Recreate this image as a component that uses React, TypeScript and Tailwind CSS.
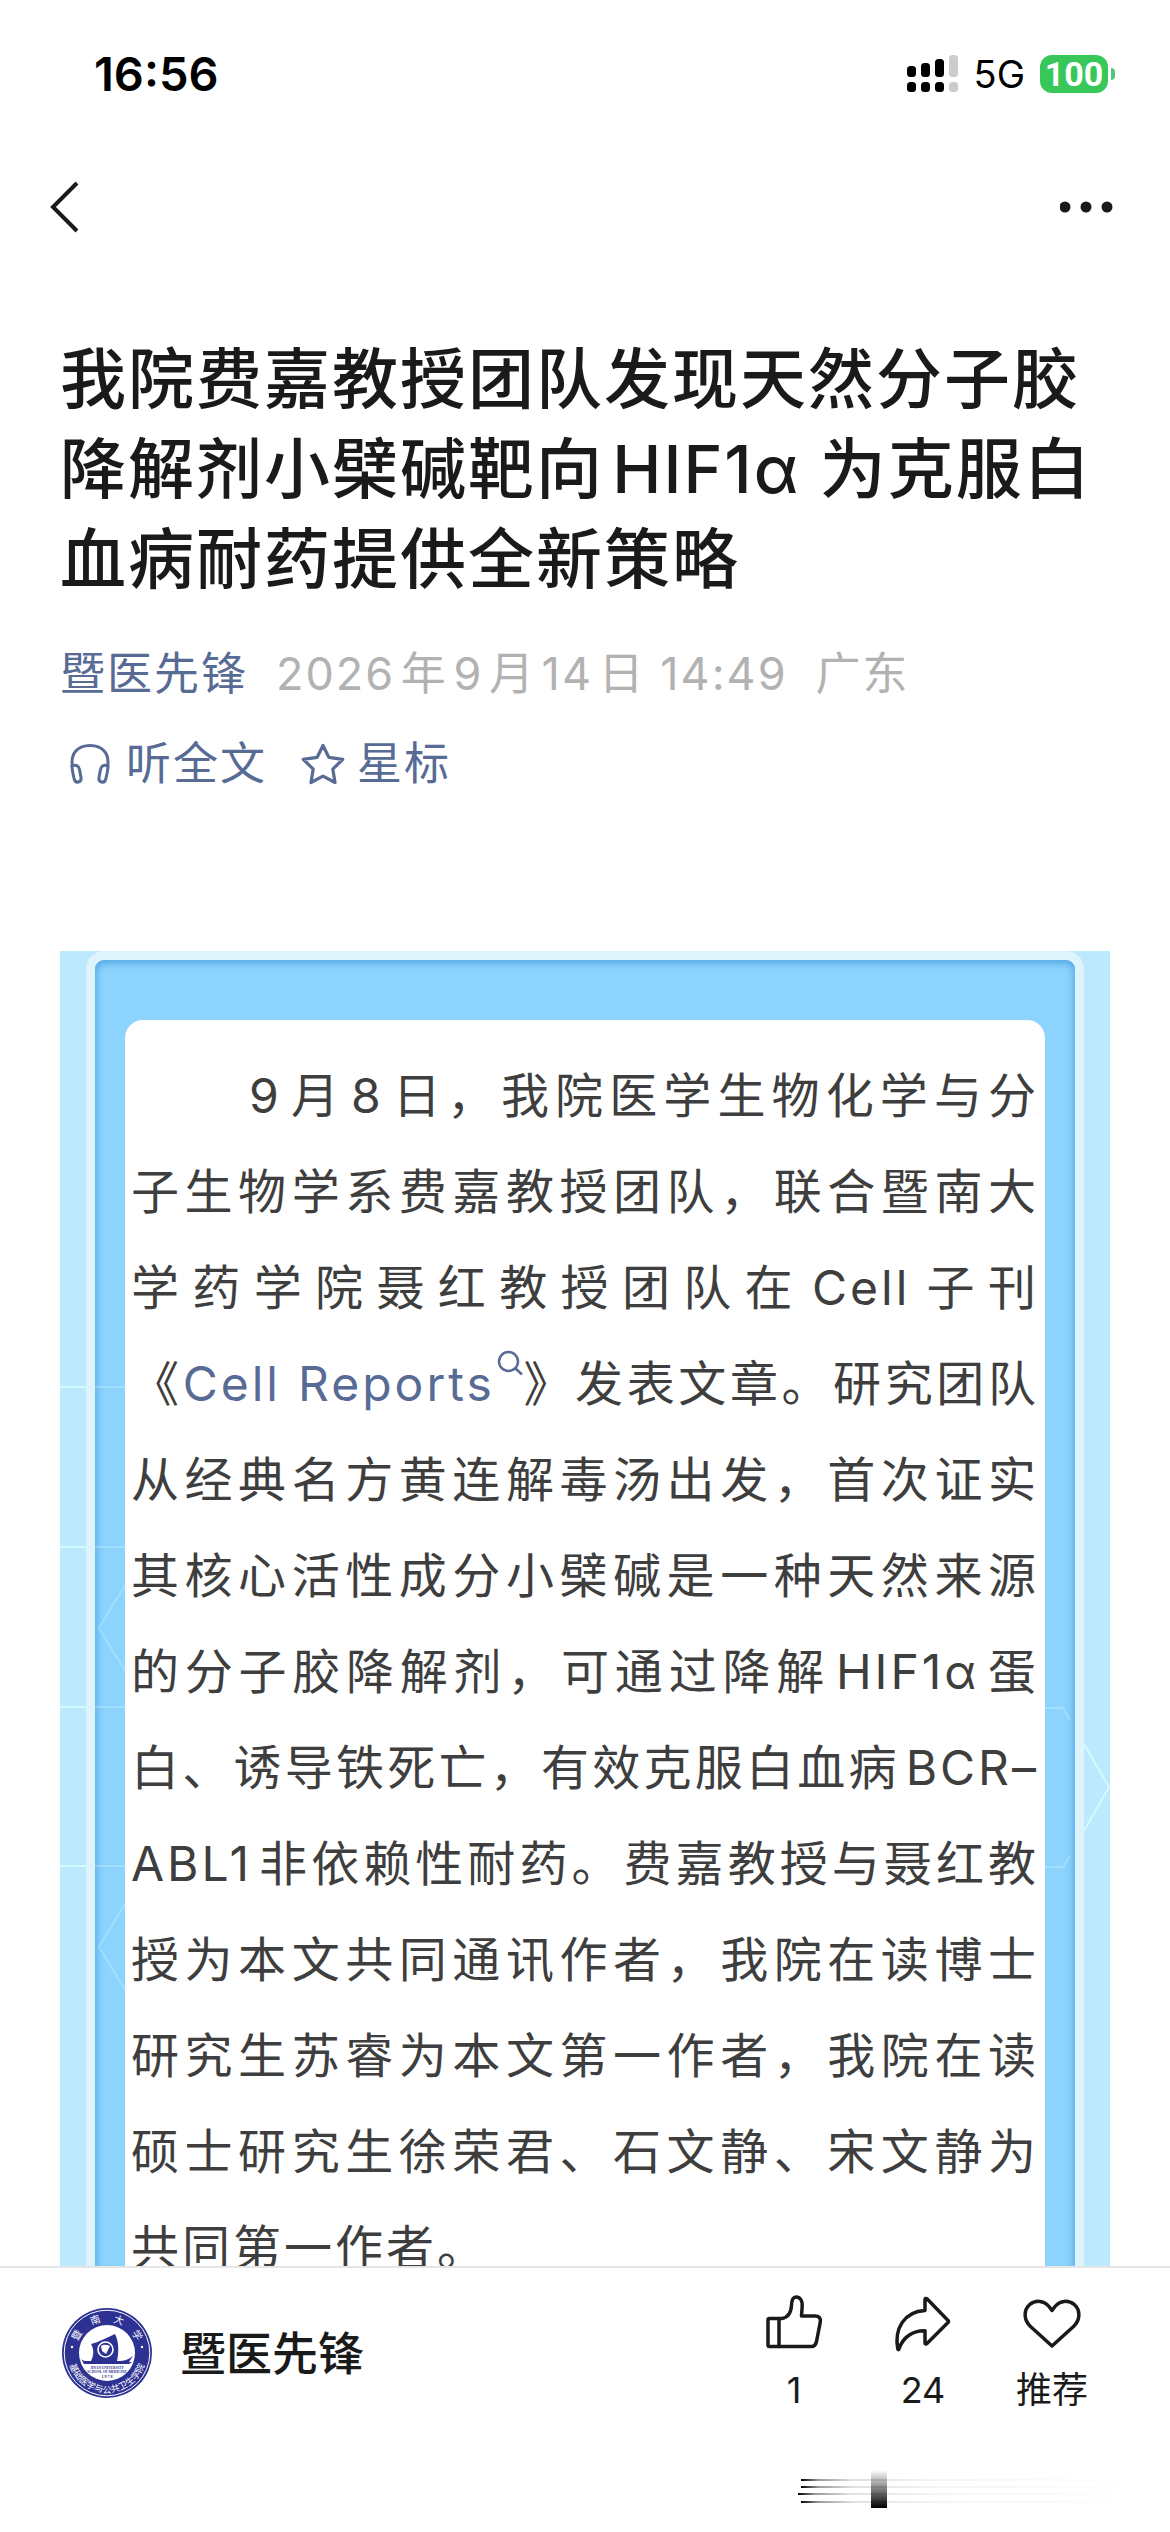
const STORY_BEFORE = "9月8日，我院医学生物化学与分子生物学系费嘉教授团队，联合暨南大学药学院聂红教授团队在Cell子刊《";
const STORY_AFTER =
  "》发表文章。研究团队从经典名方黄连解毒汤出发，首次证实其核心活性成分小檗碱是一种天然来源的分子胶降解剂，可通过降解HIF1α蛋白、诱导铁死亡，有效克服白血病BCR–ABL1非依赖性耐药。费嘉教授与聂红教授为本文共同通讯作者，我院在读博士研究生苏睿为本文第一作者，我院在读硕士研究生徐荣君、石文静、宋文静为共同第一作者。";

function SignalIcon() {
  const bars = [
    { x: 0, y: 11, fill: "#000" },
    { x: 14, y: 8, fill: "#000" },
    { x: 28, y: 4, fill: "#000" },
    { x: 42, y: 0, fill: "#ccc" },
  ];
  return (
    <svg viewBox="0 0 51 38" className="h-[38px] w-[51px]" aria-label="信号">
      {bars.map((b) => (
        <g key={b.x} fill={b.fill}>
          <rect x={b.x} y={b.y} width="9" height={22 - b.y} rx="3.5" />
          <rect x={b.x} y="27" width="9" height="10" rx="3.5" />
        </g>
      ))}
    </svg>
  );
}

function StatusBar() {
  return (
    <div className="flex h-[147px] shrink-0 items-center justify-between pr-[55px] pl-[94px]">
      <time className="text-[47px] leading-none font-semibold text-black">16:56</time>
      <div className="flex items-center">
        <SignalIcon />
        <span className="ml-[16px] text-[38px] leading-none text-black">5G</span>
        <span className="ml-[15px] flex h-[38px] w-[68px] items-center justify-center rounded-[12px] bg-[#38c759] font-[Roboto] text-[34px] leading-none font-bold text-white">
          100
        </span>
        <span className="ml-[3px] h-[12px] w-[4px] rounded-r-full bg-[#55c878]" />
      </div>
    </div>
  );
}

function NavBar() {
  return (
    <nav className="flex h-[120px] shrink-0 items-center justify-between px-12 text-[#1a1a1a]">
      <button type="button" aria-label="返回">
        <svg viewBox="0 0 34 52" className="h-[52px] w-[34px]" fill="none" stroke="currentColor" strokeWidth="4">
          <path d="M29 2 5 26l24 24" />
        </svg>
      </button>
      <button type="button" aria-label="更多">
        <svg viewBox="0 0 62 20" className="h-[20px] w-[62px]" fill="currentColor">
          <circle cx="5" cy="10" r="5.5" />
          <circle cx="26" cy="10" r="5.5" />
          <circle cx="47" cy="10" r="5.5" />
        </svg>
      </button>
    </nav>
  );
}

function HeadphonesIcon() {
  return (
    <svg viewBox="0 0 44 44" className="h-[44px] w-[44px]" fill="none" stroke="currentColor" strokeWidth="3">
      <path d="M4.500 25C2 11 10 3.500 22 3.500S42 11 39.500 25" />
      <path d="M4 24c4-1.500 6.500-.5 7.500 3.500l1.500 8c.8 5-5.500 6.500-6.800 1.500C5 32 4 27 4 24z" />
      <path d="M40 24c-4-1.500-6.500-.5-7.500 3.500l-1.500 8c-.8 5 5.500 6.500 6.800 1.500C39 32 40 27 40 24z" />
    </svg>
  );
}

function StarIcon() {
  return (
    <svg viewBox="0 0 44 44" className="h-[44px] w-[44px]" fill="none" stroke="currentColor" strokeWidth="3.200" strokeLinejoin="round">
      <path d="M22 3.500l5.800 11.800 14 2-10 9.800L34 40.500 22 34.200 10 40.500l2.200-13.400-10-9.800 14-2z" />
    </svg>
  );
}

function SearchIcon() {
  return (
    <svg viewBox="0 0 26 26" className="mb-2 ml-[2px] inline-block h-[26px] w-[26px] align-super" fill="none" stroke="currentColor" strokeWidth="2.500">
      <circle cx="11.500" cy="11.500" r="9.500" />
      <path d="M18.500 18.500l6.500 6" />
    </svg>
  );
}

function ThumbIcon() {
  return (
    <svg viewBox="0 0 60 60" className="h-[60px] w-[60px]" fill="none" stroke="currentColor" strokeWidth="3.500" strokeLinejoin="round">
      <path d="M15 26.500h3c6-1 9-6 9.500-13 .2-5.500 1-8.500 4.500-8.500 4.500 0 6.500 4 6.200 9L37.500 24H51c4 0 6 2 5.300 6l-3.800 19.500c-.8 3.500-2 5-5 5H15z" />
      <path d="M15 26.500H5.500c-1 0-1.500.5-1.500 1.500v25c0 1 .5 1.500 1.500 1.500H15" />
    </svg>
  );
}

function ShareIcon() {
  return (
    <svg viewBox="0 0 60 60" className="h-[60px] w-[60px]" fill="none" stroke="currentColor" strokeWidth="3.500" strokeLinejoin="round">
      <path d="M32 7.500c0-1 1-1.500 2-.7L55 28.500c.7.700.7 1.300 0 2L34 51.500c-1 1-2 .5-2-.5V38.800C20 38.500 10 45 6 57c-.3 1-1 1-1.200 0C1 37 11 19.500 32 18.500z" />
    </svg>
  );
}

function HeartIcon() {
  return (
    <svg viewBox="0 0 60 60" className="h-[60px] w-[60px]" fill="none" stroke="currentColor" strokeWidth="3.500" strokeLinejoin="round">
      <path d="M30 54 8.500 34.500C1.500 28 1.500 18 7.500 12.700 14 7.500 22 8.500 27 14.500l3 4 3-4c5-6 13-7 19.500-1.800C58.500 18 58.500 28 51.500 34.500z" />
    </svg>
  );
}

function SchoolLogo() {
  return (
    <svg viewBox="0 0 90 90" className="h-[90px] w-[90px]" role="img" aria-label="暨南大学基础医学与公共卫生学院">
      <defs>
        <path id="ring-top" d="M13.500 45a31.500 31.500 0 0 1 63 0" />
        <path id="ring-bottom" d="M5.500 45a39.500 39.500 0 0 0 79 0" />
      </defs>
      <circle cx="45" cy="45" r="45" fill="#2d3192" />
      <circle cx="45" cy="45" r="42.800" fill="none" stroke="#fff" strokeWidth="1" />
      <circle cx="45" cy="45" r="28" fill="#fff" />
      <g fill="#fff" fontFamily="'Noto Sans CJK SC', sans-serif" textAnchor="middle">
        <text fontSize="10">
          <textPath href="#ring-top" startOffset="17%">暨</textPath>
        </text>
        <text fontSize="10">
          <textPath href="#ring-top" startOffset="39%">南</textPath>
        </text>
        <text fontSize="10">
          <textPath href="#ring-top" startOffset="61%">大</textPath>
        </text>
        <text fontSize="10">
          <textPath href="#ring-top" startOffset="83%">学</textPath>
        </text>
        <text fontSize="9">
          <textPath href="#ring-bottom" startOffset="50%">基础医学与公共卫生学院</textPath>
        </text>
      </g>
      <circle cx="10" cy="39" r="1.200" fill="#fff" />
      <circle cx="80" cy="39" r="1.200" fill="#fff" />
      <path fill="#2d3192" d="M29 36c8-2 15-6 24-10 4 8 4 18 2 27H29c3-6 3-12 0-17z" />
      <path fill="#2d3192" d="M18 49c2 4 4 4 8 4h30c6 0 10-1 15-5l-4 6 3 0-3 2H22z" />
      <circle cx="43.500" cy="41.500" r="7.500" fill="#2d3192" stroke="#fff" strokeWidth="1.600" />
      <path fill="#fff" d="M39 38c3-2 6-1 9 0l-2 4-2 4-4-3z" />
      <g fill="#2d3192" fontFamily="'Liberation Serif', serif" fontWeight="700" textAnchor="middle">
        <text x="45" y="61" fontSize="3.500">JINAN UNIVERSITY</text>
        <text x="45" y="64.500" fontSize="3.500">SCHOOL OF MEDICINE</text>
        <text x="45" y="69.500" fontSize="4">1 9 7 8</text>
      </g>
    </svg>
  );
}

// faint hexagon grid showing through both edges of the card
function CardPattern() {
  return (
    <div className="pointer-events-none absolute inset-0 flex justify-between" aria-hidden="true">
      <svg viewBox="0 0 65 1330" className="h-[1330px] w-[65px]" fill="none" stroke="#d3fbff">
        <path strokeWidth="2" d="M0 436h27M0 596h27M0 756h27M0 915h27" />
        <path strokeWidth="2" strokeOpacity=".3" d="M35 436h30M35 596h30M35 756h30M35 915h30M65 634 39 677l26 43M65 953 39 996l26 43" />
      </svg>
      <svg viewBox="0 0 65 1330" className="h-[1330px] w-[65px]" fill="none" stroke="#d3fbff">
        <path strokeWidth="2" strokeOpacity=".3" d="M0 757h18l7 12M0 916h18l7-11" />
        <path strokeWidth="2" d="M39 793l25 43-25 44" />
      </svg>
    </div>
  );
}

function ArticleCard() {
  return (
    <section className="relative mt-[157px] bg-[#bde9ff] px-[26px]">
      <div className="rounded-t-[18px] border-x-[9px] border-t-[9px] border-[#dff3fd] bg-[#8cd4fd]">
        <div className="rounded-t-[9px] px-[30px] pt-[60px] shadow-[inset_0_2px_8px_1px_#4fa3e3]">
          <p className="relative z-10 rounded-t-[18px] bg-white px-[6px] pt-[28px] pb-[60px] text-justify indent-[118px] text-[48px] leading-[96px] tracking-[3px] text-[#3e3e3e] [text-autospace:normal]">
            {STORY_BEFORE}
            <a href="#cell-reports" className="text-[#576b95]">
              Cell Reports
              <SearchIcon />
            </a>
            {STORY_AFTER}
          </p>
        </div>
      </div>
      <CardPattern />
    </section>
  );
}

function ScrollTrace() {
  return (
    <svg viewBox="0 0 372 38" className="mt-[56px] h-[38px] w-[372px] self-end" aria-hidden="true">
      <defs>
        <linearGradient id="trace-line">
          <stop offset="0" stopColor="#000" />
          <stop offset=".05" stopColor="#000" stopOpacity=".4" />
          <stop offset=".15" stopColor="#000" stopOpacity=".12" />
          <stop offset=".4" stopColor="#000" stopOpacity=".04" />
          <stop offset="1" stopColor="#000" stopOpacity="0" />
        </linearGradient>
        <linearGradient id="trace-block" x2="0" y2="1">
          <stop offset="0" stopColor="#000" stopOpacity="0" />
          <stop offset=".5" stopColor="#000" stopOpacity=".5" />
          <stop offset="1" stopColor="#000" />
        </linearGradient>
      </defs>
      <g fill="url(#trace-line)">
        <rect x="3" y="9" width="345" height="2" />
        <rect x="3" y="16" width="345" height="2" />
        <rect x="0" y="23" width="345" height="2" />
        <rect x="3" y="31" width="345" height="2" />
      </g>
      <rect x="73" y="0" width="16" height="38" fill="url(#trace-block)" />
    </svg>
  );
}

const ACTIONS = [
  { label: "1", Icon: ThumbIcon },
  { label: "24", Icon: ShareIcon },
  { label: "推荐", Icon: HeartIcon },
];

function BottomBar() {
  return (
    <footer className="flex shrink-0 flex-col border-t-2 border-[#e5e5e5] bg-white pt-6 pb-6 text-[#1a1a1a]">
      <div className="flex items-center justify-between pr-[82px] pl-[62px]">
        <a href="#account" className="flex items-center gap-7">
          <SchoolLogo />
          <span className="text-[46px] leading-[60px] font-medium">暨医先锋</span>
        </a>
        <div className="flex gap-[57px]">
          {ACTIONS.map(({ label, Icon }) => (
            <button key={label} type="button" className="flex w-[72px] flex-col items-center gap-[14px]">
              <Icon />
              <span className="text-[36px] leading-[48px]">{label}</span>
            </button>
          ))}
        </div>
      </div>
      <ScrollTrace />
    </footer>
  );
}

export default function App() {
  return (
    <div lang="zh-CN" className="flex h-screen flex-col bg-white font-[Inter,'Noto_Sans_CJK_SC',sans-serif]">
      <StatusBar />
      <NavBar />
      <main className="min-h-0 flex-1 overflow-hidden px-[60px]">
        <h1 className="mt-[67px] text-[66px] leading-[90px] font-medium tracking-[2px] text-[#1a1a1a] [text-autospace:normal]">
          我院费嘉教授团队发现天然分子胶降解剂小檗碱靶向HIF1α 为克服白血病耐药提供全新策略
        </h1>
        <div className="mt-[40px] flex items-center gap-7 text-[45px] leading-[60px] tracking-[2px] text-[#b2b2b2]">
          <a href="#account" className="text-[#576b95]">
            暨医先锋
          </a>
          <time className="[text-autospace:normal]">2026年9月14日 14:49</time>
          <span>广东</span>
        </div>
        <div className="mt-[30px] flex items-center gap-[34px] pl-[8px] text-[45px] leading-[60px] text-[#576b95]">
          <button type="button" className="flex items-center gap-[14px] tracking-[2px]">
            <HeadphonesIcon />
            听全文
          </button>
          <button type="button" className="flex items-center gap-[12px] tracking-[2px]">
            <StarIcon />
            星标
          </button>
        </div>
        <ArticleCard />
      </main>
      <BottomBar />
    </div>
  );
}
